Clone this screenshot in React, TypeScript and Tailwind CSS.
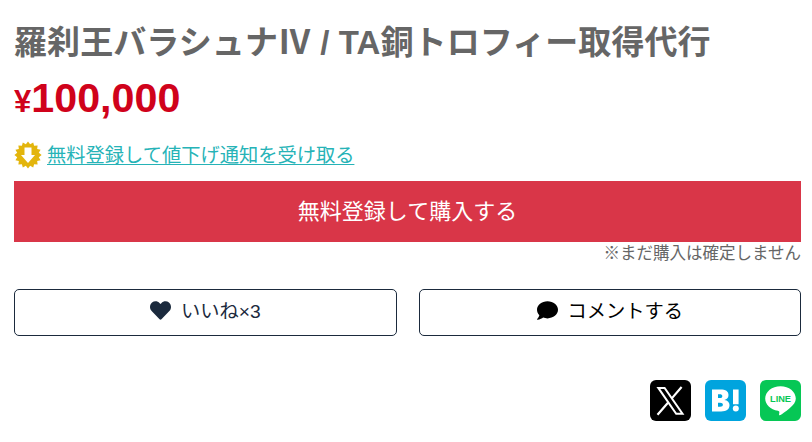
import { FaComment, FaHeart } from "react-icons/fa";

const SealIcon = () => {
  const points = Array.from({ length: 32 }, (_, i) => {
    const radius = i % 2 === 0 ? 13.6 : 11;
    const angle = (i * Math.PI) / 16;
    return `${14 + radius * Math.sin(angle)},${14 - radius * Math.cos(angle)}`;
  }).join(" ");

  return (
    <svg viewBox="0 0 28 28" className="mb-0.5 size-7 shrink-0">
      <polygon points={points} fill="#e3b50c" />
      <path d="M10.5 6.5h7v7.5h3.5L14 22 7 14h3.5z" fill="#fff" />
    </svg>
  );
};

const XIcon = () => (
  <svg viewBox="0 0 41 41" className="size-[41px]">
    <rect width="41" height="41" rx="6" fill="#000" />
    <g fill="none" stroke="#fff">
      <path d="M8.3 7.9h6.3L32.5 33.8h-6.3z" strokeWidth="2" />
      <path d="M31.6 7L21.8 18.4M18.2 22.5L7.5 34.8" strokeWidth="2.2" />
    </g>
  </svg>
);

const HatenaIcon = () => (
  <svg viewBox="0 0 41 41" className="size-[41px]">
    <rect width="41" height="41" rx="6" fill="#00a4de" />
    <path
      fill="#fff"
      fillRule="evenodd"
      d="M7 9.5h8.3c5.5 0 8.2 1.8 8.2 5.6 0 2.8-1.5 4.4-4.2 4.8 3.5.5 5.2 2.3 5.2 5.2 0 4.3-2.8 6.4-8.4 6.4H7zM13 14.3v3.8h1.6c1.8 0 2.7-.6 2.7-1.9s-.9-1.9-2.7-1.9zM13 22.8v4h2.1c1.9 0 2.8-.7 2.8-2s-.9-2-2.8-2zM28 9.5h5.6v14.7H28z"
    />
    <circle cx="30.8" cy="28.6" r="3" fill="#fff" />
  </svg>
);

const LineIcon = () => (
  <svg viewBox="0 0 41 41" className="size-[41px]">
    <rect width="41" height="41" rx="6" fill="#06c755" />
    <path
      d="M20.5 6.2C12 6.2 5.2 11.7 5.2 18.6c0 6.1 5.4 11.2 12.7 12.2 1.8.4 1.6 1.1 1.2 3.5-.1.7-.1 1.3.9.8 1-.4 5.8-3.4 9.6-6.9 4-3.5 6.2-5.9 6.2-9.6C35.8 11.7 29 6.2 20.5 6.2z"
      fill="#fff"
    />
    <text
      x="20.5"
      y="22"
      textAnchor="middle"
      textLength="21"
      lengthAdjust="spacingAndGlyphs"
      className="fill-[#06c755] font-['Liberation_Sans',sans-serif] text-[9.5px] font-bold"
    >
      LINE
    </text>
  </svg>
);

const App = () => {
  return (
    <main className="h-[442px] bg-white pl-3.5 pr-[11px] pt-[18px] font-['Liberation_Sans','Noto_Sans_CJK_JP',sans-serif] text-[16.5px] text-[#666]">
      <h1 className="h-[49px] whitespace-nowrap text-[33px] font-bold leading-[50px] tracking-[0.08px]">
        羅刹王バラシュナⅣ / TA銅トロフィー取得代行
      </h1>
      <p className="h-[63px] text-[41.25px] font-bold leading-[62px] text-[#d0021b]">
        <span className="text-[31px]">¥</span>100,000
      </p>
      <div className="flex h-[51px] items-center gap-[5px]">
        <SealIcon />
        <a
          href="#"
          className="pt-0.5 text-[19.25px] text-[#26b3b7] underline decoration-1 underline-offset-2"
        >
          無料登録して値下げ通知を受け取る
        </a>
      </div>
      <button className="block h-[61px] w-full bg-[#d93648] text-[22px] text-white">
        無料登録して購入する
      </button>
      <p className="h-6 text-right leading-[23px]">※まだ購入は確定しません</p>
      <div className="mt-[23px] flex gap-[22px]">
        <button className="flex h-[47px] flex-1 items-center justify-center gap-2.5 rounded-[5px] border border-[#1b2a3d] text-[19.25px] text-[#1b2a3d]">
          <FaHeart className="mb-1 size-[21px]" />
          <span>いいね×3</span>
        </button>
        <button className="flex h-[47px] flex-1 items-center justify-center gap-2.5 rounded-[5px] border border-[#1b2a3d] text-[19.25px] text-black">
          <FaComment className="mb-1 size-[21px]" />
          <span>コメントする</span>
        </button>
      </div>
      <div className="mt-11 flex justify-end gap-3.5">
        <XIcon />
        <HatenaIcon />
        <LineIcon />
      </div>
    </main>
  );
};

export default App;
